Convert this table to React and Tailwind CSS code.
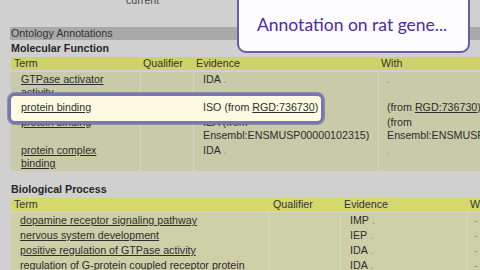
export default function App() {
  const dot = <span className="text-[#8a8a80]"> .</span>;
  const cell = "shrink-0 bg-[#c8caa8] py-[1px]";
  const bcell = "shrink-0 bg-[#cdcfa7] py-[1px]";
  return (
    <div className="relative w-[480px] h-[270px] overflow-hidden bg-[#d0d0d0] font-['Liberation_Sans',Arial,sans-serif] text-[10.7px] leading-[13px] text-[#2e2e2e]">
      {/* tail of the record table above */}
      <div className="flex h-[27px]">
        <div className="-mt-[6px] ml-[126px] text-[#4a4a4a]">current</div>
      </div>

      <div className="ml-[10px] h-[13px] bg-[#a9a9a9] pl-[1px] text-[#333]">Ontology Annotations</div>
      <div className="ml-[11px] mt-[2px] h-[13px] font-bold text-[#262626]">Molecular Function</div>

      {/* Molecular Function table */}
      <section className="ml-[11px] mt-[2px]">
        <div className="flex h-[13px] bg-[#cfd26a] text-[#333]">
          <div className="w-[130px] shrink-0 pl-[3px]">Term</div>
          <div className="w-[53px] shrink-0 pl-[2px]">Qualifier</div>
          <div className="w-[185px] shrink-0 pl-[2px]">Evidence</div>
          <div className="min-w-0 flex-1 pl-[2px]">With</div>
        </div>
        <div className="mt-[2px] flex flex-col">
          <div className="flex gap-[1px] bg-[#d6d8bf]">
            <div className={`w-[129px] pl-[10px] whitespace-nowrap underline ${cell}`}>GTPase activator<br />activity</div>
            <div className={`w-[52px] ${cell}`}></div>
            <div className={`w-[184px] pl-[9px] ${cell}`}>IDA{dot}</div>
            <div className="min-w-0 flex-1 bg-[#c8caa8] py-[1px] pl-[8px] text-[#8a8a80]">.</div>
          </div>
          <div className="flex gap-[1px] bg-[#d6d8bf]">
            <div className={`w-[129px] pl-[10px] ${cell}`}><span className="relative z-20 underline">protein binding</span></div>
            <div className={`w-[52px] ${cell}`}></div>
            <div className={`w-[184px] pl-[9px] ${cell}`}><span className="relative z-20 whitespace-nowrap">ISO (from <span className="underline">RGD:736730</span>)</span></div>
            <div className="min-w-0 flex-1 bg-[#c8caa8] py-[1px] pl-[8px] whitespace-nowrap">(from <span className="underline">RGD:736730</span>)</div>
          </div>
          <div className="flex gap-[1px] bg-[#d6d8bf]">
            <div className={`w-[129px] pl-[10px] underline ${cell}`}>protein binding</div>
            <div className={`w-[52px] ${cell}`}></div>
            <div className={`w-[184px] pl-[9px] whitespace-nowrap ${cell}`}>IEA (from<br />Ensembl:ENSMUSP00000102315)</div>
            <div className="min-w-0 flex-1 bg-[#c8caa8] py-[1px] pl-[8px] whitespace-nowrap">(from<br />Ensembl:ENSMUSP00000102315)</div>
          </div>
          <div className="flex gap-[1px] bg-[#d6d8bf]">
            <div className={`w-[129px] pl-[10px] whitespace-nowrap underline ${cell}`}>protein complex<br />binding</div>
            <div className={`w-[52px] ${cell}`}></div>
            <div className={`w-[184px] pl-[9px] ${cell}`}>IDA{dot}</div>
            <div className="min-w-0 flex-1 bg-[#c8caa8] py-[1px] pl-[8px] text-[#8a8a80]">.</div>
          </div>
        </div>
      </section>

      <div className="ml-[11px] mt-[12px] h-[13px] font-bold text-[#262626]">Biological Process</div>

      {/* Biological Process table */}
      <section className="ml-[11px] mt-[2px]">
        <div className="flex h-[13px] bg-[#d5d86a] text-[#333] whitespace-nowrap">
          <div className="w-[259px] shrink-0 pl-[3px]">Term</div>
          <div className="w-[71px] shrink-0 pl-[3px]">Qualifier</div>
          <div className="w-[126px] shrink-0 pl-[3px]">Evidence</div>
          <div className="w-[60px] shrink-0 pl-[3px]">With</div>
        </div>
        <div className="mt-[2px] flex flex-col">
          {[
            ["dopamine receptor signaling pathway", "IMP"],
            ["nervous system development", "IEP"],
            ["positive regulation of GTPase activity", "IDA"],
            ["regulation of G-protein coupled receptor protein", "IDA"],
          ].map(([term, ev]) => (
            <div key={term} className="flex gap-[1px] bg-[#d8dac0]">
              <div className={`w-[258px] pl-[9px] whitespace-nowrap ${bcell}`}><span className="underline">{term}</span></div>
              <div className={`w-[70px] ${bcell}`}></div>
              <div className={`w-[125px] pl-[9px] ${bcell}`}>{ev}{dot}</div>
              <div className={`w-[60px] pl-[7px] text-[#8a8a80] ${bcell}`}>-</div>
            </div>
          ))}
        </div>
      </section>

      {/* highlight ring around the rat annotation row */}
      <div className="absolute left-[8px] top-[93px] z-10 h-[31px] w-[316px] rounded-[7px] border-[3px] border-[#7875b8] bg-[#fffbe2] shadow-[0_0_0_1px_rgba(70,68,140,0.45)]"></div>

      {/* callout */}
      <div className="absolute left-[237px] top-[-8px] z-30 h-[61px] w-[233px] rounded-[9px] border-2 border-[#6a5aa8] bg-[#fdfcff] pl-[18px] pt-[20px] font-['Lato',sans-serif] text-[17.5px] leading-[22px] text-[#4b2c9e] whitespace-nowrap">
        Annotation on rat gene...
      </div>
    </div>
  );
}
